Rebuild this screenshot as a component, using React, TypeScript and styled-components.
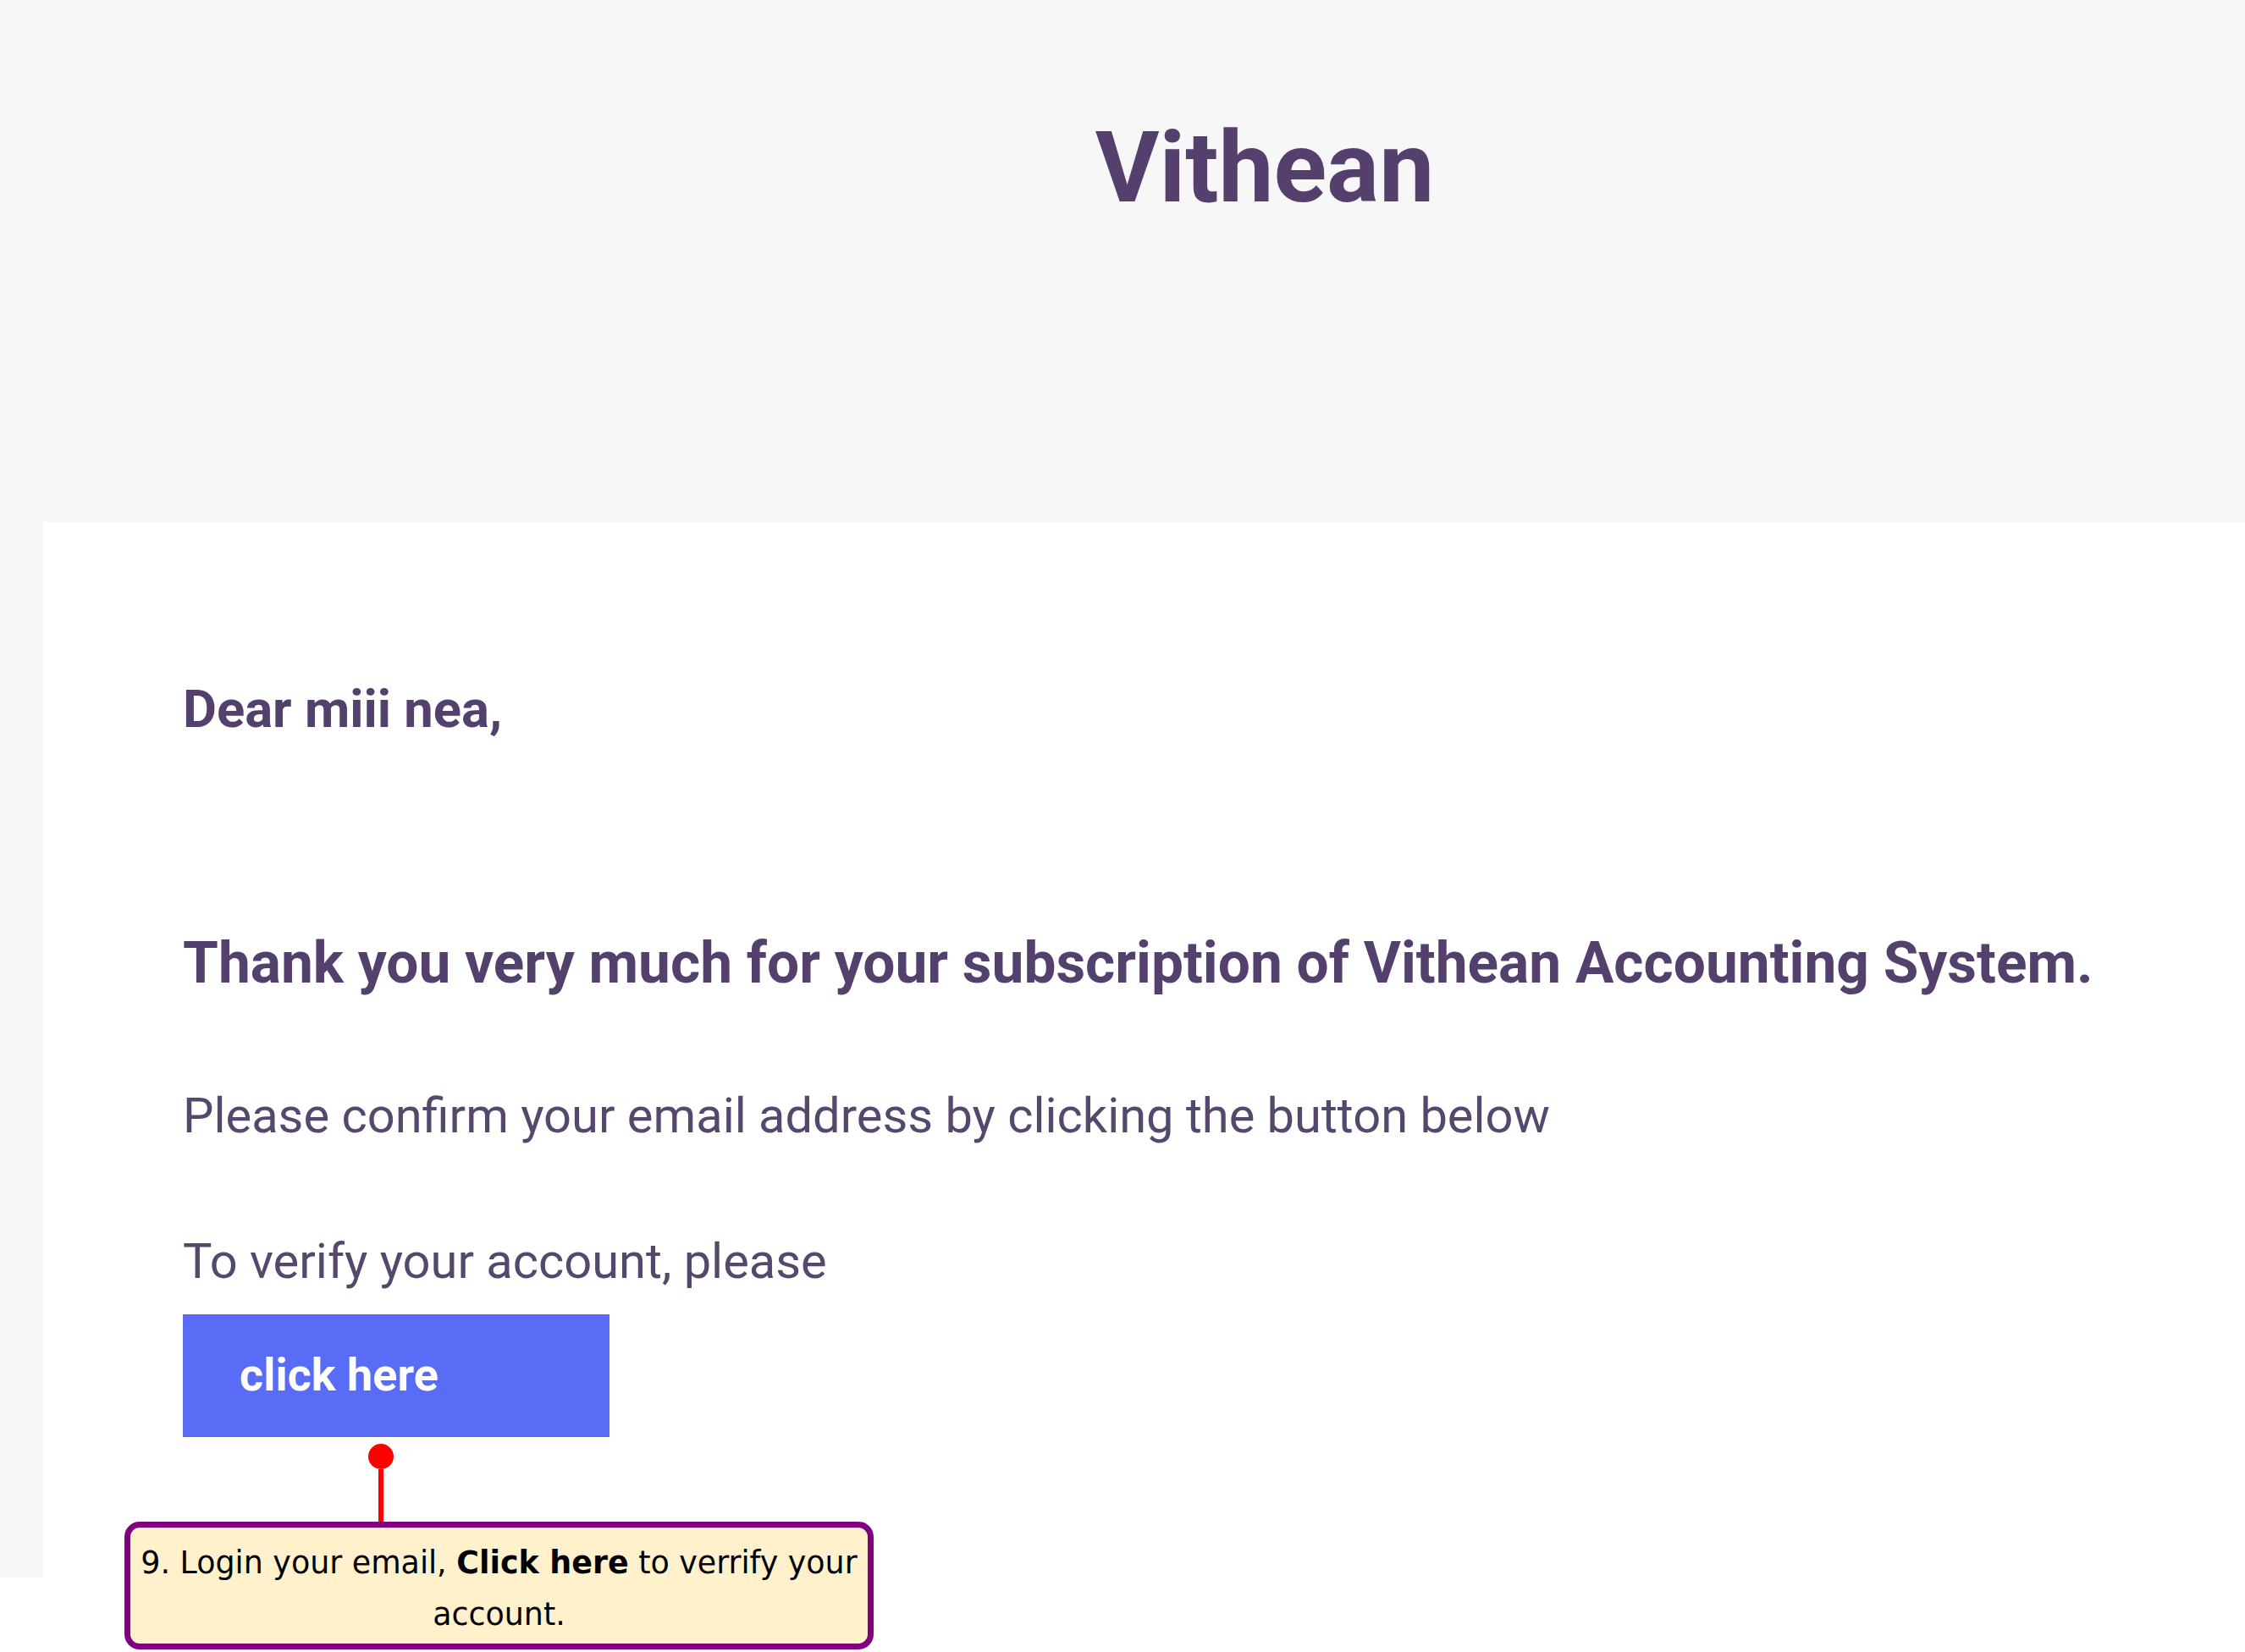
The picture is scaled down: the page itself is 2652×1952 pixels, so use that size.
import React from "react"
import styled, { createGlobalStyle } from "styled-components"

const GlobalStyle = createGlobalStyle`
  html, body {
    margin: 0;
    padding: 0;
    background: #ffffff;
  }
  body {
    font-family: Roboto, "Liberation Sans", Arial, sans-serif;
  }
`

const Page = styled.div`
  width: 2652px;
  height: 1952px;
  overflow: hidden;
  background: #ffffff;
`

const Frame = styled.div`
  display: flex;
  flex-direction: column;
  height: 1864px;
  background: #f7f7f7;
`

const Header = styled.header`
  display: flex;
  justify-content: center;
  height: 617px;
  box-sizing: border-box;
  padding: 140px 0 0 336px;
`

const Brand = styled.h1`
  margin: 0;
  font-family: Roboto, "Liberation Sans", sans-serif;
  font-size: 116px;
  font-weight: 700;
  line-height: 1;
  color: #553f6d;
`

const Card = styled.main`
  flex: 1;
  display: flex;
  flex-direction: column;
  align-items: flex-start;
  margin-left: 51px;
  padding: 191px 0 0 165px;
  background: #ffffff;
`

const Text = styled.p<{ $size: number; $bold?: boolean; $gap: number }>`
  margin: ${(p) => p.$gap}px 0 0;
  font-family: Roboto, "Liberation Sans", sans-serif;
  font-size: ${(p) => p.$size}px;
  font-weight: ${(p) => (p.$bold ? 700 : 400)};
  line-height: 1;
  color: ${(p) => (p.$bold ? "#53406c" : "#56476d")};
  white-space: nowrap;
`

const ButtonWrap = styled.div`
  position: relative;
  margin-top: 33px;
`

const VerifyButton = styled.a`
  display: flex;
  align-items: center;
  box-sizing: border-box;
  width: 504px;
  height: 145px;
  padding-left: 67px;
  background: #586cf6;
  color: #ffffff;
  font-family: Roboto, "Liberation Sans", sans-serif;
  font-size: 54px;
  font-weight: 700;
  line-height: 1;
  text-decoration: none;
`

const Annotation = styled.div`
  position: absolute;
  left: -69px;
  top: 153px;
  display: flex;
  flex-direction: column;
  align-items: flex-start;
`

const Dot = styled.span`
  width: 30px;
  height: 30px;
  margin-left: 288px;
  border-radius: 50%;
  background: #ff0000;
`

const Stem = styled.span`
  width: 6px;
  height: 62px;
  margin-left: 300px;
  background: #ff0000;
`

const Callout = styled.div`
  box-sizing: border-box;
  width: 885px;
  height: 151px;
  padding: 11px 8px 4px;
  border: 7px solid #800080;
  border-radius: 18px;
  background: #fff1cc;
  color: #000000;
  font-family: "DejaVu Sans", Verdana, sans-serif;
  font-size: 36.4px;
  line-height: 61px;
  text-align: center;

  strong {
    font-weight: 700;
  }
`

export default function App() {
  return (
    <Page>
      <GlobalStyle />
      <Frame>
        <Header>
          <Brand>Vithean</Brand>
        </Header>
        <Card>
          <Text $size={61.5} $bold $gap={0}>
            Dear miii nea,
          </Text>
          <Text $size={67.6} $bold $gap={235}>
            Thank you very much for your subscription of Vithean Accounting System.
          </Text>
          <Text $size={57.8} $gap={118}>
            Please confirm your email address by clicking the button below
          </Text>
          <Text $size={57.8} $gap={114}>
            To verify your account, please
          </Text>
          <ButtonWrap>
            <VerifyButton href="#">click here</VerifyButton>
            <Annotation>
              <Dot />
              <Stem />
              <Callout>
                9. Login your email, <strong>Click here</strong> to verrify your account.
              </Callout>
            </Annotation>
          </ButtonWrap>
        </Card>
      </Frame>
    </Page>
  )
}
